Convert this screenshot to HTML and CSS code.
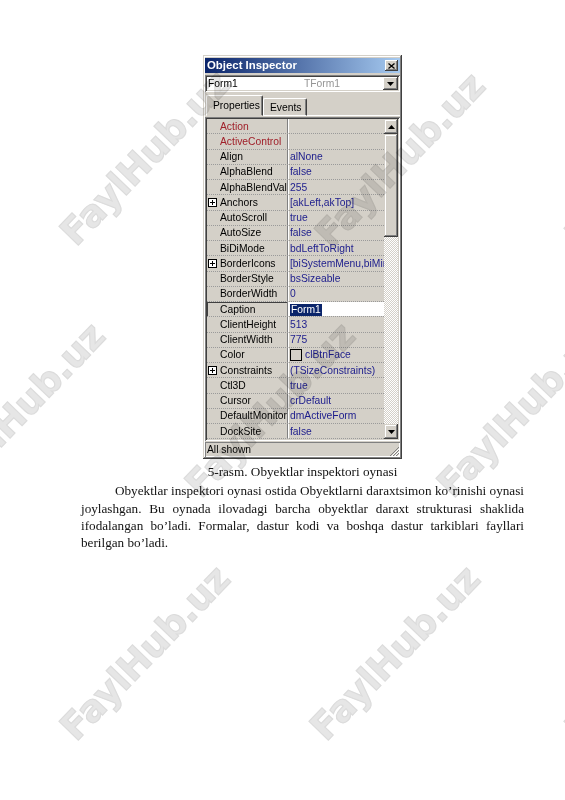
FILE: index.html
```html
<!DOCTYPE html>
<html lang="uz">
<head>
<meta charset="utf-8">
<title>Object Inspector</title>
<link rel="stylesheet" href="styles.css">
</head>
<body>
<div class="page">
  <div class="figure">
    <div class="inspector">
      <div class="titlebar">
        <span class="title">Object Inspector</span>
        <span class="closebtn"><svg width="7" height="6" viewBox="0 0 7 6"><path d="M0.5 0.5 L6.5 5.5 M6.5 0.5 L0.5 5.5" stroke="#000" stroke-width="1.3"/></svg></span>
      </div>
      <div class="combo">
        <span class="c-name">Form1</span>
        <span class="c-type">TForm1</span>
        <span class="ddbtn"><svg width="7" height="4" viewBox="0 0 7 4"><path d="M0 0 H7 L3.5 4 Z" fill="#000"/></svg></span>
      </div>
      <div class="tabs">
        <span class="tab active">Properties</span>
        <span class="tab">Events</span>
        <span class="tabfill"></span>
      </div>
      <div class="panel">
        <div class="grid">
          <div class="rows">
            <div class="row"><div class="name ref"><span class="sp"></span>Action</div><div class="val"></div></div>
            <div class="row"><div class="name ref"><span class="sp"></span>ActiveControl</div><div class="val"></div></div>
            <div class="row"><div class="name"><span class="sp"></span>Align</div><div class="val">alNone</div></div>
            <div class="row"><div class="name"><span class="sp"></span>AlphaBlend</div><div class="val">false</div></div>
            <div class="row"><div class="name"><span class="sp"></span>AlphaBlendValue</div><div class="val">255</div></div>
            <div class="row"><div class="name"><span class="plus"></span>Anchors</div><div class="val">[akLeft,akTop]</div></div>
            <div class="row"><div class="name"><span class="sp"></span>AutoScroll</div><div class="val">true</div></div>
            <div class="row"><div class="name"><span class="sp"></span>AutoSize</div><div class="val">false</div></div>
            <div class="row"><div class="name"><span class="sp"></span>BiDiMode</div><div class="val">bdLeftToRight</div></div>
            <div class="row"><div class="name"><span class="plus"></span>BorderIcons</div><div class="val">[biSystemMenu,biMinimize,biMaximize]</div></div>
            <div class="row"><div class="name"><span class="sp"></span>BorderStyle</div><div class="val">bsSizeable</div></div>
            <div class="row"><div class="name"><span class="sp"></span>BorderWidth</div><div class="val">0</div></div>
            <div class="row sel"><div class="name"><span class="sp"></span>Caption</div><div class="val"><span class="seltext">Form1</span></div></div>
            <div class="row"><div class="name"><span class="sp"></span>ClientHeight</div><div class="val">513</div></div>
            <div class="row"><div class="name"><span class="sp"></span>ClientWidth</div><div class="val">775</div></div>
            <div class="row"><div class="name"><span class="sp"></span>Color</div><div class="val"><span class="swatch"></span>clBtnFace</div></div>
            <div class="row"><div class="name"><span class="plus"></span>Constraints</div><div class="val">(TSizeConstraints)</div></div>
            <div class="row"><div class="name"><span class="sp"></span>Ctl3D</div><div class="val">true</div></div>
            <div class="row"><div class="name"><span class="sp"></span>Cursor</div><div class="val">crDefault</div></div>
            <div class="row"><div class="name"><span class="sp"></span>DefaultMonitor</div><div class="val">dmActiveForm</div></div>
            <div class="row"><div class="name"><span class="sp"></span>DockSite</div><div class="val">false</div></div>
          </div>
          <div class="scrollbar">
            <div class="sbtn"><svg width="7" height="4" viewBox="0 0 7 4"><path d="M3.5 0 L7 4 H0 Z" fill="#000"/></svg></div>
            <div class="thumb"></div>
            <div class="track"></div>
            <div class="sbtn"><svg width="7" height="4" viewBox="0 0 7 4"><path d="M0 0 H7 L3.5 4 Z" fill="#000"/></svg></div>
          </div>
        </div>
      </div>
      <div class="status">
        <span>All shown</span>
        <svg class="grip" width="11" height="11" viewBox="0 0 11 11"><path d="M10 1 L1 10 M10 4 L4 10 M10 7 L7 10" stroke="#808080" stroke-width="1"/><path d="M11 2 L2 11 M11 5 L5 11 M11 8 L8 11" stroke="#fff" stroke-width="1"/></svg>
      </div>
    </div>
    <p class="caption">5-rasm. Obyektlar inspektori oynasi</p>
  </div>
  <p class="para">
    <span class="ln first">Obyektlar inspektori oynasi ostida Obyektlarni daraxtsimon ko’rinishi oynasi</span>
    <span class="ln">joylashgan. Bu oynada ilovadagi barcha obyektlar daraxt strukturasi shaklida</span>
    <span class="ln">ifodalangan bo’ladi. Formalar, dastur kodi va boshqa dastur tarkiblari fayllari</span>
    <span class="ln last">berilgan bo’ladi.</span>
  </p>
</div>
<div class="wm-layer" aria-hidden="true">
  <span class="wm wm1">FaylHub.uz</span>
  <span class="wm wm2">FaylHub.uz</span>
  <span class="wm wm3">FaylHub.uz</span>
  <span class="wm wm4">FaylHub.uz</span>
  <span class="wm wm5">FaylHub.uz</span>
  <span class="wm wm6">FaylHub.uz</span>
  <span class="wm wm7">FaylHub.uz</span>
  <span class="wm wm8">FaylHub.uz</span>
  <span class="wm wm9">FaylHub.uz</span>
</div>
</body>
</html>
```
FILE: styles.css
```css
html, body {
  margin: 0;
  padding: 0;
  background: #fff;
}
body {
  position: relative;
  width: 565px;
  height: 800px;
  overflow: hidden;
}
.page {
  padding-top: 55px;
}
.figure {
  margin-left: 203px;
  width: 199px;
}
.inspector {
  box-sizing: border-box;
  width: 199px;
  padding: 3px 2px 2px 2px;
  background: #d4d0c8;
  box-shadow: inset -1px -1px #404040, inset 1px 1px #d4d0c8, inset -2px -2px #808080, inset 2px 2px #fff;
  font-family: "Liberation Sans", Arial, sans-serif;
  font-size: 10.3px;
  color: #000;
}
.titlebar {
  height: 15px;
  display: flex;
  align-items: center;
  justify-content: space-between;
  background: linear-gradient(to right, #0a246a, #a6caf0);
  padding: 0 2px 0 2px;
}
.title {
  color: #fff;
  font-weight: bold;
  font-size: 11.4px;
  line-height: 15px;
  white-space: nowrap;
}
.closebtn {
  width: 13px;
  height: 11px;
  background: #d4d0c8;
  box-shadow: inset -1px -1px #404040, inset 1px 1px #fff, inset -2px -2px #808080;
  display: flex;
  align-items: center;
  justify-content: center;
}
.combo {
  margin-top: 2px;
  height: 17px;
  box-sizing: border-box;
  padding: 2px;
  background: #fff;
  box-shadow: inset 1px 1px #808080, inset -1px -1px #fff, inset 2px 2px #404040, inset -2px -2px #d4d0c8;
  display: flex;
  align-items: center;
}
.c-name {
  width: 96px;
  padding-left: 1px;
}
.c-type {
  flex: 1;
  color: #949494;
}
.ddbtn {
  width: 15px;
  height: 13px;
  background: #d4d0c8;
  box-shadow: inset -1px -1px #404040, inset 1px 1px #fff, inset -2px -2px #808080;
  display: flex;
  align-items: center;
  justify-content: center;
}
.tabs {
  margin-top: 3px;
  height: 21px;
  display: flex;
  align-items: flex-end;
}
.tab {
  box-sizing: border-box;
  height: 18px;
  padding: 2px 5px 0 6px;
  border-top: 1px solid #fff;
  border-left: 1px solid #fff;
  border-right: 1px solid #404040;
  box-shadow: inset -1px 0 #808080;
  border-radius: 2px 2px 0 0;
  border-bottom: 1px solid #fff;
  line-height: 14px;
  font-size: 10.3px;
}
.tab.active {
  height: 21px;
  padding-top: 3px;
  margin-left: 1px;
  width: 57px;
  border-bottom: 1px solid #d4d0c8;
  padding-left: 6px;
}
.tabfill {
  flex: 1;
  height: 0;
  border-bottom: 1px solid #fff;
}
.panel {
  padding-top: 1px;
}
.grid {
  display: flex;
  padding: 2px;
  box-shadow: inset 1px 1px #808080, inset -1px -1px #fff, inset 2px 2px #404040, inset -2px -2px #d4d0c8;
}
.rows {
  width: 177px;
}
.row {
  display: flex;
  height: 15.25px;
  box-sizing: border-box;
  border-bottom: 1px dotted #9a9a9a;
  line-height: 14px;
  padding-top: 1px;
}
.name {
  width: 81px;
  box-sizing: border-box;
  padding-left: 1px;
  border-right: 1px solid #808080;
  white-space: nowrap;
  overflow: hidden;
  display: flex;
  align-items: center;
  margin-top: -1px;
  padding-top: 1px;
}
.name.ref {
  color: #a0202a;
}
.sp {
  display: inline-block;
  width: 12px;
  flex: none;
}
.plus {
  flex: none;
  width: 9px;
  height: 9px;
  margin-right: 3px;
  box-sizing: border-box;
  border: 1px solid #000;
  background:
    linear-gradient(#000, #000) center / 5px 1px no-repeat,
    linear-gradient(#000, #000) center / 1px 5px no-repeat,
    #fff;
}
.val {
  flex: 1;
  border-left: 1px solid #fff;
  padding-left: 1px;
  color: #1c1c8c;
  white-space: nowrap;
  overflow: hidden;
  display: flex;
  align-items: center;
  margin-top: -1px;
  padding-top: 1px;
}
.row.sel .name {
  box-shadow: inset 1px 1px #404040;
}
.row.sel .val {
  background: #fff;
}
.seltext {
  background: #0a246a;
  color: #fff;
  padding: 0 1px;
  line-height: 12px;
}
.swatch {
  display: inline-block;
  width: 12px;
  height: 12px;
  box-sizing: border-box;
  border: 1px solid #000;
  background: #d4d0c8;
  margin-right: 3px;
  flex: none;
}
.scrollbar {
  width: 16px;
  display: flex;
  flex-direction: column;
}
.sbtn {
  height: 15px;
  background: #d4d0c8;
  box-shadow: inset -1px -1px #404040, inset 1px 1px #d4d0c8, inset -2px -2px #808080, inset 2px 2px #fff;
  display: flex;
  align-items: center;
  justify-content: center;
}
.thumb {
  height: 103px;
  background: #d4d0c8;
  box-shadow: inset -1px -1px #404040, inset 1px 1px #d4d0c8, inset -2px -2px #808080, inset 2px 2px #fff;
}
.track {
  flex: 1;
  background-color: #e6e3de;
  background-image: repeating-conic-gradient(#ffffff 0 25%, #d4d0c8 0 50%);
  background-size: 2px 2px;
}
.status {
  margin-top: 1px;
  height: 15px;
  box-sizing: border-box;
  padding-left: 2px;
  padding-top: 1px;
  box-shadow: inset 1px 1px #808080, inset -1px -1px #fff;
  display: flex;
  align-items: center;
  justify-content: space-between;
  line-height: 12px;
}
.grip {
  align-self: flex-end;
}
.caption {
  margin: 4px -20px 0 -20px;
  text-align: center;
  font-family: "Liberation Serif", "Times New Roman", serif;
  font-size: 13.2px;
  line-height: 17px;
  color: #111;
}
.para {
  margin: 2px 0 0 81px;
  width: 443px;
  font-family: "Liberation Serif", "Times New Roman", serif;
  font-size: 13.2px;
  line-height: 17.4px;
  color: #111;
}
.ln {
  display: block;
  text-align: justify;
  text-align-last: justify;
  white-space: nowrap;
}
.ln.first {
  text-indent: 34px;
}
.ln.last {
  text-align-last: left;
}
.wm-layer {
  position: absolute;
  left: 0;
  top: 0;
  width: 565px;
  height: 800px;
  overflow: hidden;
  pointer-events: none;
}
.wm {
  position: absolute;
  transform: translate(-50%, -50%) rotate(-46deg);
  font-family: "DejaVu Sans", "Liberation Sans", sans-serif;
  font-weight: bold;
  font-size: 37px;
  letter-spacing: -0.5px;
  color: #e6e6e6;
  -webkit-text-stroke: 1.2px #dcdcdc;
  white-space: nowrap;
  mix-blend-mode: multiply;
}
.wm1 { left: 145px; top: 158px; }
.wm2 { left: 400px; top: 160px; }
.wm3 { left: 650px; top: 160px; }
.wm4 { left: 20px; top: 410px; }
.wm5 { left: 270px; top: 410px; }
.wm6 { left: 522px; top: 410px; }
.wm7 { left: 145px; top: 653px; }
.wm8 { left: 395px; top: 653px; }
.wm9 { left: 650px; top: 653px; }
```
